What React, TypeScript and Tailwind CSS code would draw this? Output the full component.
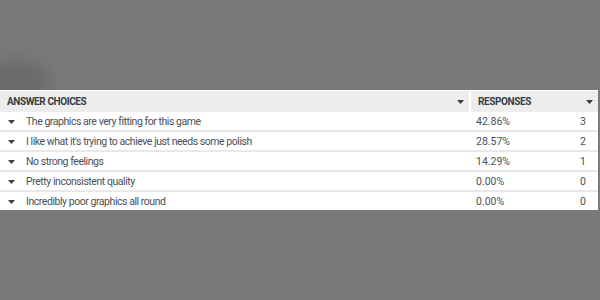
import React from "react";

const Caret = () => (
  <svg width="7" height="4" viewBox="0 0 7 4" className="shrink-0">
    <path d="M0 0 H7 L3.5 4 Z" fill="#333e48" />
  </svg>
);

const rows = [
  ["The graphics are very fitting for this game", "42.86%", "3"],
  ["I like what it's trying to achieve just needs some polish", "28.57%", "2"],
  ["No strong feelings", "14.29%", "1"],
  ["Pretty inconsistent quality", "0.00%", "0"],
  ["Incredibly poor graphics all round", "0.00%", "0"],
];

export default function App() {
  return (
    <div
      className="relative w-[600px] h-[300px] overflow-hidden bg-[#7a7a7a] flex flex-col"
      style={{ fontFamily: "Roboto, 'Liberation Sans', sans-serif" }}
    >
      <div className="absolute left-[-20px] top-[62px] w-[70px] h-[40px] rounded-full bg-[#5e5e5e] blur-[10px] opacity-60" />
      <div className="h-[90px] shrink-0" />
      <div className="relative w-[598px] border-t border-white bg-white">
        <div className="flex h-[21px] bg-[#ededed] text-[10px] font-bold text-[#333e48] tracking-[-0.4px]">
          <div className="flex-1 flex items-center justify-between pl-[7px] pr-[5px]">
            <span>ANSWER CHOICES</span>
            <Caret />
          </div>
          <div className="w-[2px] bg-white" />
          <div className="w-[127px] flex items-center justify-between pl-[7px] pr-[5px]">
            <span>RESPONSES</span>
            <Caret />
          </div>
        </div>
        {rows.map(([label, pct, n], i) => (
          <div
            key={i}
            className={`flex items-center text-[10.5px] text-[#4a4f56] ${i < rows.length - 1 ? "h-[20px] border-b-2 border-[#e8e8e8] pt-[1px]" : "h-[18px] pt-[1px]"}`}
          >
            <div className="flex-1 flex items-center pl-[8px] gap-[11px]">
              <Caret />
              <span className="tracking-[-0.45px]">{label}</span>
            </div>
            <div className="w-[129px] flex items-center justify-between pl-[7px] pr-[12px]">
              <span>{pct}</span>
              <span>{n}</span>
            </div>
          </div>
        ))}
      </div>
    </div>
  );
}
